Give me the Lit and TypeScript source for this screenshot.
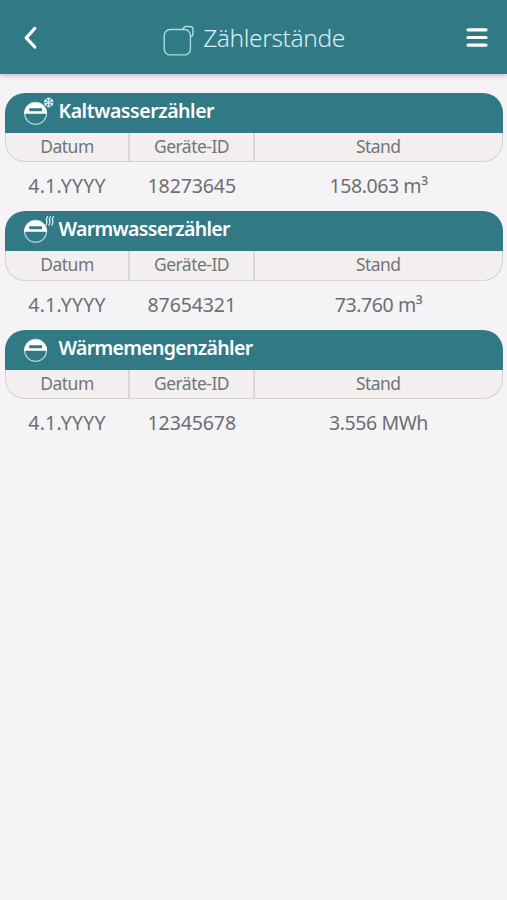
import { LitElement, html, svg, css, nothing } from "lit";
import { customElement, property } from "lit/decorators.js";

type MeterKind = "cold" | "warm" | "heat";

interface Meter {
  kind: MeterKind;
  title: string;
  date: string;
  id: string;
  value: string;
}

const METERS: Meter[] = [
  { kind: "cold", title: "Kaltwasserzähler", date: "4.1.YYYY", id: "18273645", value: "158.063 m³" },
  { kind: "warm", title: "Warmwasserzähler", date: "4.1.YYYY", id: "87654321", value: "73.760 m³" },
  { kind: "heat", title: "Wärmemengenzähler", date: "4.1.YYYY", id: "12345678", value: "3.556 MWh" },
];

@customElement("meter-icon")
export class MeterIcon extends LitElement {
  @property() kind: MeterKind = "heat";

  static styles = css`
    :host { display: block; width: 32px; height: 30px; }
    svg { display: block; }
  `;

  render() {
    const snow = svg`
      <g fill="none" stroke="#d5ecef" stroke-width="1.2">
        <path d="M25.7 1.4V11.4M21.4 3.9L30 8.9M21.4 8.9L30 3.9" />
        <path d="M23.9 2L25.7 3.6L27.5 2M23.9 10.8L25.7 9.2L27.5 10.8M21.1 5.6L23.4 5.1L22.7 2.9M30.3 7.2L28 7.7L28.7 9.9M21.1 7.2L23.4 7.7L22.7 9.9M30.3 5.6L28 5.1L28.7 2.9" />
      </g>`;
    const steam = svg`
      <path fill="none" stroke="#d5ecef" stroke-width="1.4"
        d="M24.7 2.1q-1.8 2.6-1 4.8t-1 4.8M27.7 2.1q-1.8 2.6-1 4.8t-1 4.8M30.7 2.1q-1.8 2.6-1 4.8t-1 4.8" />`;
    return html`
      <svg width="32" height="30" viewBox="0 0 32 30">
        <circle cx="12.6" cy="17.3" r="11" fill="none" stroke="#b5dbe0" stroke-width="1.1" />
        <path fill="#fff" fill-rule="evenodd"
          d="M1.2 17.8A11.4 11.4 0 0 1 24 17.8ZM6.2 12.2V15.2H19V12.2Z" />
        ${this.kind === "cold" ? snow : this.kind === "warm" ? steam : nothing}
      </svg>`;
  }
}

@customElement("meter-card")
export class MeterCard extends LitElement {
  @property({ attribute: false }) meter!: Meter;

  static styles = css`
    :host { display: block; height: 118.5px; }
    .title {
      display: flex;
      height: 40px;
      box-sizing: border-box;
      padding-left: 18px;
      background: #317985;
      border-radius: 20px 20px 0 0;
      color: #fff;
      font-size: 19.5px;
      font-weight: 600;
      letter-spacing: -0.6px;
      line-height: 35px;
    }
    .cold { letter-spacing: -0.45px; }
    .warm, .heat { letter-spacing: -0.68px; }
    meter-icon { margin-top: 3px; margin-right: 4px; }
    .row { display: grid; grid-template-columns: 124px 124.5px 1fr; text-align: center; }
    .head {
      grid-template-columns: 123px 125px 1fr;
      height: 29.5px;
      box-sizing: border-box;
      background: #f2efee;
      border: 1px solid #d6d3d5;
      border-top: 0;
      border-radius: 0 0 20px 20px;
      color: #727678;
      font-size: 17.5px;
      letter-spacing: -0.52px;
      line-height: 27px;
    }
    .head .cell + .cell { border-left: 2px solid #d9d6d7; margin-left: -1px; }
    .values { color: #6b7073; font-size: 19.5px; line-height: 47.5px; }
    .date { letter-spacing: 0.2px; padding-left: 1px; }
    .id { letter-spacing: -0.1px; padding-left: 2px; }
    .value { letter-spacing: -0.42px; padding-left: 1px; }
  `;

  render() {
    const m = this.meter;
    return html`
      <div class="title"><meter-icon .kind=${m.kind}></meter-icon><span class=${m.kind}>${m.title}</span></div>
      <div class="row head">
        <span class="cell">Datum</span><span class="cell">Geräte-ID</span><span class="cell">Stand</span>
      </div>
      <div class="row values">
        <span class="date">${m.date}</span><span class="id">${m.id}</span><span class="value">${m.value}</span>
      </div>`;
  }
}

@customElement("app-root")
export class AppRoot extends LitElement {
  static styles = css`
    :host {
      display: block;
      min-height: 900px;
      background: #f5f3f6;
      font-family: "Noto Sans", "Open Sans", sans-serif;
    }
    .bar {
      display: grid;
      grid-template-columns: 40px 1fr 40px;
      grid-template-rows: 74px;
      align-items: center;
      height: 74px;
      box-sizing: border-box;
      padding: 0 19px 0 16px;
      background: #317985;
      box-shadow: 0 1px 5px rgba(80, 50, 60, 0.35);
    }
    .heading {
      display: flex;
      justify-content: center;
      align-items: center;
      gap: 8px;
      padding-left: 4px;
      color: #d9eef2;
      font-size: 24.5px;
      font-weight: 300;
      letter-spacing: -0.4px;
      line-height: 36px;
      padding-top: 2px;
    }
    .heading svg { margin-top: 4px; }
    .menu { justify-self: end; }
    svg { display: block; }
    .list { padding: 18.5px 4px 0 4.5px; }
  `;

  render() {
    return html`
      <header class="bar">
        <svg width="30" height="30" viewBox="0 0 30 30" fill="none" stroke="#fff" stroke-width="3.2"
          stroke-linecap="round" stroke-linejoin="round"><path d="M18.8 6.4L10.2 15.8L18.8 25" /></svg>
        <div class="heading">
          <svg width="32" height="32" viewBox="0 0 32 32" fill="none" stroke="#a9dbe2" stroke-width="1.4">
            <rect x="1.2" y="5.5" width="26.2" height="25.4" rx="6" />
            <path d="M20 5.4Q20.5 2.5 23.2 2.5H27Q30 2.5 30 5.5V9.5Q30 12.3 27.4 12.6" />
          </svg>
          <span>Zählerstände</span>
        </div>
        <svg class="menu" width="22" height="22" viewBox="0 0 22 22" fill="none" stroke="#fff"
          stroke-width="3.2" stroke-linecap="round"><path d="M2 3.8H20M2 11.5H20M2 19.1H20" /></svg>
      </header>
      <main class="list">${METERS.map((m) => html`<meter-card .meter=${m}></meter-card>`)}</main>`;
  }
}
